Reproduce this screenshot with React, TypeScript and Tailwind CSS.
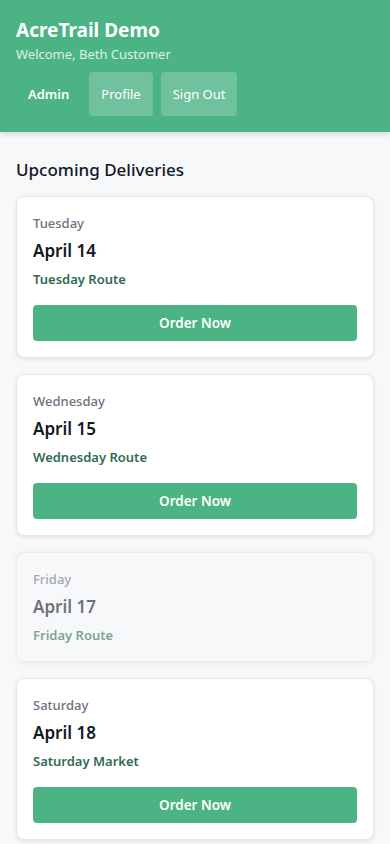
import React from "react";

interface Delivery {
  id: string;
  day: string;
  date: string;
  route: string;
  open: boolean;
}

const deliveries: Delivery[] = [
  { id: "tue", day: "Tuesday", date: "April 14", route: "Tuesday Route", open: true },
  { id: "wed", day: "Wednesday", date: "April 15", route: "Wednesday Route", open: true },
  { id: "fri", day: "Friday", date: "April 17", route: "Friday Route", open: false },
  { id: "sat", day: "Saturday", date: "April 18", route: "Saturday Market", open: true },
];

function DeliveryCard({ delivery }: { delivery: Delivery }) {
  return (
    <div
      className={
        delivery.open
          ? "rounded-lg border border-[#e5e7eb] bg-white p-4 shadow-[0_1px_4px_rgba(0,0,0,0.1)]"
          : "rounded-lg border border-[#e5e7eb] bg-[#f8f9fb] p-4 shadow-[0_1px_4px_rgba(0,0,0,0.1)] opacity-60"
      }
    >
      <div className="text-[13px] leading-5 font-medium text-[#6b7280]">{delivery.day}</div>
      <div className="mt-1 text-[17px] leading-7 font-semibold text-[#111827]">{delivery.date}</div>
      <div className="mt-1 text-[13px] leading-5 font-semibold text-[#2f6b4f]">{delivery.route}</div>
      {delivery.open && (
        <button className="mt-4 h-9 w-full rounded bg-[#4cb385] text-[13.5px] font-semibold text-white">
          Order Now
        </button>
      )}
    </div>
  );
}

export default function App() {
  return (
    <div
      className="min-h-screen bg-[#f7f8fa]"
      style={{ fontFamily: '"Noto Sans", "Open Sans", sans-serif' }}
    >
      <header className="bg-[#4cb385] px-4 pt-4 pb-4 shadow-[0_2px_6px_rgba(0,0,0,0.15)]">
        <h1 className="text-[19px] leading-7 font-bold text-white">AcreTrail Demo</h1>
        <p className="text-[13px] leading-5 text-white/80">Welcome, Beth Customer</p>
        <nav className="mt-2 flex gap-2">
          <button className="rounded px-3 py-3 text-[13px] leading-5 font-semibold text-white">Admin</button>
          <button className="rounded bg-white/20 px-3 py-3 text-[13px] leading-5 text-white">Profile</button>
          <button className="rounded bg-white/20 px-3 py-3 text-[13px] leading-5 text-white">Sign Out</button>
        </nav>
      </header>

      <main className="px-4 pt-6 pb-6">
        <h2 className="mb-3 text-[17px] leading-7 font-medium text-[#111827]">Upcoming Deliveries</h2>
        <div className="flex flex-col gap-4">
          {deliveries.map((d) => (
            <DeliveryCard key={d.id} delivery={d} />
          ))}
        </div>
      </main>
    </div>
  );
}
